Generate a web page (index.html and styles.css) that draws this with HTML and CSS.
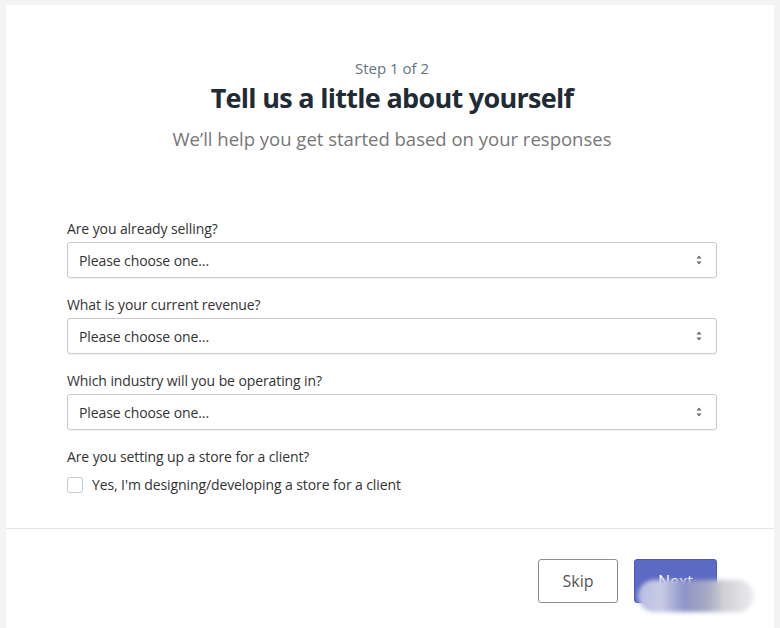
FILE: index.html
```html
<!DOCTYPE html>
<html lang="en">
<head>
    <meta charset="UTF-8">
    <meta name="viewport" content="width=device-width, initial-scale=1.0">
    <title>Tell us a little about yourself</title>
    <link rel="stylesheet" href="styles.css">
</head>
<body>

    <div class="card">
        <div class="intro">
            <p class="step">Step 1 of 2</p>
            <h1>Tell us a little about yourself</h1>
            <p class="subtitle">We’ll help you get started based on your responses</p>
        </div>

        <form class="survey">
            <div class="field">
                <label for="selling">Are you already selling?</label>
                <div class="select">
                    <select id="selling"><option>Please choose one...</option></select>
                    <svg class="arrows" width="8" height="12" viewBox="0 0 8 12"><path d="M4 1.5 L6.5 4.5 H1.5 Z M4 10.5 L6.5 7.5 H1.5 Z" fill="#666"/></svg>
                </div>
            </div>
            <div class="field">
                <label for="revenue">What is your current revenue?</label>
                <div class="select">
                    <select id="revenue"><option>Please choose one...</option></select>
                    <svg class="arrows" width="8" height="12" viewBox="0 0 8 12"><path d="M4 1.5 L6.5 4.5 H1.5 Z M4 10.5 L6.5 7.5 H1.5 Z" fill="#666"/></svg>
                </div>
            </div>
            <div class="field">
                <label for="industry">Which industry will you be operating in?</label>
                <div class="select">
                    <select id="industry"><option>Please choose one...</option></select>
                    <svg class="arrows" width="8" height="12" viewBox="0 0 8 12"><path d="M4 1.5 L6.5 4.5 H1.5 Z M4 10.5 L6.5 7.5 H1.5 Z" fill="#666"/></svg>
                </div>
            </div>
            <div class="field">
                <p class="label">Are you setting up a store for a client?</p>
                <label class="check">
                    <input type="checkbox">
                    <span>Yes, I'm designing/developing a store for a client</span>
                </label>
            </div>
        </form>

        <div class="footer">
            <button class="btn skip">Skip</button>
            <button class="btn next">Next</button>
            <div class="smudge"></div>
        </div>
    </div>

</body>
</html>
```

FILE: styles.css
```css
body {
    margin: 0;
    background: #f4f4f5;
    font-family: "Open Sans", "Noto Sans", sans-serif;
    color: #333;
}

.card {
    margin: 5px 6px 0;
    height: 623px;
    background: #fff;
    display: flex;
    flex-direction: column;
}

.intro {
    text-align: center;
    padding: 52px 57px 0 61px;
}

.step {
    margin: 0;
    font-size: 15px;
    line-height: 22px;
    color: #637381;
}

h1 {
    margin: 0;
    font-size: 27px;
    line-height: 38px;
    font-weight: 700;
    color: #212b36;
    letter-spacing: -0.7px;
}

.subtitle {
    margin: 9px 0 0;
    font-size: 18.5px;
    line-height: 26px;
    color: #777;
}

.survey {
    padding: 68px 57px 0 61px;
    display: flex;
    flex-direction: column;
    gap: 18px;
}

.field {
    display: flex;
    flex-direction: column;
    gap: 4px;
}

.field label,
.label {
    margin: 0;
    font-size: 14px;
    line-height: 18px;
    color: #333;
    letter-spacing: -0.1px;
}

.select {
    position: relative;
}

select {
    appearance: none;
    width: 100%;
    height: 36px;
    padding: 0 11px;
    border: 1px solid #c4cdd5;
    border-radius: 3px;
    background: #fff;
    font-family: inherit;
    font-size: 14px;
    color: #333;
    letter-spacing: -0.1px;
    box-shadow: 0 1px 0 rgba(22, 29, 37, 0.05);
}

.arrows {
    position: absolute;
    right: 14px;
    top: 12px;
    pointer-events: none;
}

.field .check {
    display: flex;
    align-items: center;
    gap: 9px;
    margin-top: 6px;
}

.check input {
    appearance: none;
    margin: 0;
    width: 16px;
    height: 16px;
    border: 1px solid #c4cdd5;
    border-radius: 3px;
    background: #fff;
}

.footer {
    box-sizing: border-box;
    margin-top: auto;
    height: 100px;
    border-top: 1px solid #e3e5e8;
    display: flex;
    justify-content: flex-end;
    align-items: flex-start;
    gap: 16px;
    padding: 30px 57px 0 0;
    position: relative;
}

.btn {
    height: 44px;
    border-radius: 3px;
    font-family: inherit;
    font-size: 16px;
    cursor: pointer;
}

.skip {
    width: 80px;
    background: #fff;
    border: 1px solid #8a8f94;
    color: #555;
}

.next {
    width: 83px;
    background: #5c6ac4;
    border: 1px solid #4959bd;
    color: #fff;
}

.smudge {
    position: absolute;
    left: 632px;
    top: 51px;
    width: 116px;
    height: 32px;
    border-radius: 16px;
    background: linear-gradient(90deg, #b8bde2, #c9cce6 20%, #8d94c8 40%, #a7aac2 60%, #d2d2d6 75%, #ececee);
    filter: blur(2px);
}
```
